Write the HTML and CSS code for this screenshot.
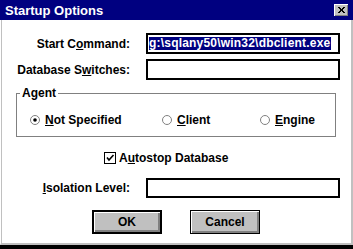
FILE: index.html
```html
<html>
    <head>
        <meta name="viewport" content="width=device-width, initial-scale=1.0">
        <link rel="stylesheet" href="styles.css">
    </head>
    <body>
        <div class="window">
            <div class="titlebar">
                <span class="title">Startup Options</span>
                <span class="close">
                    <svg viewBox="0 0 14 12" width="14" height="12">
                        <path d="M 4 3 L 10 9 M 5 3 L 11 9 M 10 3 L 4 9 M 11 3 L 5 9" stroke="#000" stroke-width="1" />
                    </svg>
                </span>
            </div>
            <div class="body">
                <div class="field first">
                    <label class="label">Start C<u>o</u>mmand:</label>
                    <div class="input"><span class="selected">g:\sqlany50\win32\dbclient.exe</span></div>
                </div>
                <div class="field">
                    <label class="label">Database S<u>w</u>itches:</label>
                    <div class="input"></div>
                </div>

                <fieldset class="group">
                    <legend>Agent</legend>
                    <div class="radios">
                        <label class="radio r1">
                            <svg viewBox="0 0 10 10" width="10" height="10">
                                <circle cx="5" cy="5" r="4.5" fill="#fff" stroke="#808080" />
                                <circle cx="5" cy="5" r="1.8" fill="#000" />
                            </svg>
                            <span><u>N</u>ot Specified</span>
                        </label>
                        <label class="radio r2">
                            <svg viewBox="0 0 10 10" width="10" height="10">
                                <circle cx="5" cy="5" r="4.5" fill="#fff" stroke="#808080" />
                            </svg>
                            <span><u>C</u>lient</span>
                        </label>
                        <label class="radio r3">
                            <svg viewBox="0 0 10 10" width="10" height="10">
                                <circle cx="5" cy="5" r="4.5" fill="#fff" stroke="#808080" />
                            </svg>
                            <span><u>E</u>ngine</span>
                        </label>
                    </div>
                </fieldset>

                <label class="check">
                    <svg viewBox="0 0 12 12" width="12" height="12">
                        <rect x="0.5" y="0.5" width="11" height="11" fill="#fff" stroke="#000" />
                        <path d="M 3 5.5 L 5 8 L 9.5 3" fill="none" stroke="#000" stroke-width="1.6" />
                    </svg>
                    <span>A<u>u</u>tostop Database</span>
                </label>

                <div class="field iso">
                    <label class="label"><u>I</u>solation Level:</label>
                    <div class="input short"></div>
                </div>

                <div class="buttons">
                    <button class="btn default">OK</button>
                    <button class="btn">Cancel</button>
                </div>
            </div>
        </div>
    </body>
</html>
```

FILE: styles.css
```css
body{
    margin: 0;
    background: #fff;
}
.window{
    width: 353px;
    height: 249px;
    box-sizing: border-box;
    display: flex;
    flex-direction: column;
    background: #fff;
    border-bottom: 4px solid #000;
    font: bold 12px "Liberation Sans", Arial, sans-serif;
    color: #000;
}
.titlebar{
    height: 20px;
    flex: none;
    display: flex;
    align-items: center;
    justify-content: space-between;
    padding: 0 5px 0 5px;
    background: #000080;
    color: #fff;
    font-size: 13px;
}
.close{
    width: 14px;
    height: 12px;
    display: flex;
    background: #c0c0c0;
    box-shadow: inset 1px 1px #fff, inset -1px -1px #808080;
}
.body{
    flex: 1;
    display: flex;
    flex-direction: column;
    border-left: 1px solid #fff;
    border-right: 2px solid #c0c0c0;
    border-bottom: 2px solid #c0c0c0;
    box-shadow: inset 1px 0 #c0c0c0;
}
.field{
    display: flex;
    align-items: center;
    gap: 16px;
    margin-top: 5px;
}
.field.first{
    margin-top: 13px;
}
.label{
    width: 129px;
    text-align: right;
}
.input{
    width: 194px;
    height: 21px;
    box-sizing: border-box;
    border: 2px solid #000;
    display: flex;
    align-items: center;
    padding-left: 1px;
}
.input.short{
    height: 20px;
}
.selected{
    background: #000080;
    color: #fff;
    line-height: 13px;
    padding-right: 1px;
    letter-spacing: 0.2px;
}
.group{
    margin: 6px 0 0 15px;
    width: 320px;
    box-sizing: border-box;
    border: 1px solid #808080;
    padding: 0 0 9px 0;
}
.group legend{
    padding: 0 2px;
    margin-left: 3px;
    line-height: 14px;
}
.radios{
    display: flex;
    align-items: center;
    padding-left: 13px;
    margin-top: 13px;
    line-height: 14px;
}
.radio{
    display: flex;
    align-items: center;
    gap: 5px;
}
.r1{
    width: 132px;
}
.r2{
    width: 98px;
}
.check{
    display: flex;
    align-items: center;
    gap: 3px;
    margin: 14px 0 0 103px;
    line-height: 14px;
}
.field.iso{
    margin-top: 13px;
}
.buttons{
    display: flex;
    justify-content: center;
    gap: 28px;
    margin-top: 12px;
}
.btn{
    width: 70px;
    height: 24px;
    font: inherit;
    color: #000;
    background: #c0c0c0;
    border: 1px solid #000;
    box-shadow: inset 1px 1px #fff, inset -2px -2px #808080;
    padding: 0;
}
.btn.default{
    border-width: 2px;
}
```
